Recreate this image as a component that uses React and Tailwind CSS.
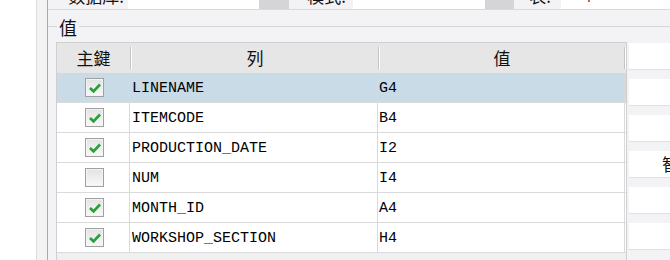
import React from 'react';

const rows = [
  { pk: true, col: 'LINENAME', val: 'G4', sel: true },
  { pk: true, col: 'ITEMCODE', val: 'B4' },
  { pk: true, col: 'PRODUCTION_DATE', val: 'I2' },
  { pk: false, col: 'NUM', val: 'I4' },
  { pk: true, col: 'MONTH_ID', val: 'A4' },
  { pk: true, col: 'WORKSHOP_SECTION', val: 'H4' },
];

function Check({ checked }) {
  return (
    <div className="w-[19px] h-[19px] border border-[#a0a0a0] flex">
      <div className="flex-1 border border-[#f4f4f4] bg-linear-to-b from-[#e4e4e4] to-[#f7f7f7]">
        {checked && (
          <svg width="15" height="15" viewBox="0 0 15 15" className="block">
            <path d="M3 8 L6.5 11.3 L13 4.5" stroke="#22a336" strokeWidth="2.6" fill="none" />
          </svg>
        )}
      </div>
    </div>
  );
}

function HeadSep() {
  return <div className="w-[2px] h-[22px] border-l border-[#c4c4c4] border-r border-r-white" />;
}

export default function App() {
  const cjk = "font-['Noto_Sans_CJK_SC','Microsoft_YaHei',sans-serif]";
  const mono = "font-['Liberation_Mono',monospace]";
  return (
    <div className={`w-[670px] h-[260px] overflow-hidden bg-white flex ${cjk}`}>
      <div className="w-[36px] bg-white shrink-0" />
      <div className="w-px bg-[#dedede] shrink-0" />
      <div className="w-[10px] bg-[#f3f3f4] shrink-0" />
      <div className="w-px bg-[#a9a9a9] shrink-0" />
      <div className="flex-1 bg-[#f3f3f5] flex flex-col min-w-0">
        {/* top inputs row, mostly cut off */}
        <div className="h-[10px] flex shrink-0 border-b border-[#dadadc] overflow-hidden text-[17px] text-[#111]">
          <div className="w-[80px] flex justify-end pr-[4px] leading-[18px] mt-[-13px]">数据库:</div>
          <div className="w-[131px] bg-white" />
          <div className="w-[30px] bg-[#d5d5d8]" />
          <div className="w-[64px] flex justify-end pr-[7px] leading-[18px] mt-[-13px]">模式:</div>
          <div className="w-[132px] bg-white pl-[12px] text-[13px] leading-[14px] mt-[-12px] text-[#333]">SCHEMA01</div>
          <div className="w-[29px] bg-[#d5d5d8]" />
          <div className="w-[47px] flex justify-end pr-[10px] leading-[18px] mt-[-13px]">表:</div>
          <div className="flex-1 bg-white pl-[24px] text-[13px] leading-[14px] mt-[-10px] text-[#333]">T</div>
        </div>
        {/* group box title */}
        <div className="h-[32px] shrink-0 flex items-center">
          <div className="w-[9px] h-px bg-[#d6d6d8] mt-[1px]" />
          <div className="text-[18px] leading-[20px] text-[#111] px-[2px] mt-[1px]">值</div>
          <div className="flex-1 h-px bg-[#d6d6d8] mt-[1px]" />
        </div>
        {/* content */}
        <div className="flex flex-1 min-h-0 pl-[8px]">
          <div className="w-[571px] shrink-0 border border-[#cfcfcf] bg-[#f0f0f0] flex flex-col h-[240px]">
            <div className="h-[30px] bg-[#e6e6e6] flex items-center text-[17px] text-[#111] shrink-0">
              <div className="w-[73px] flex justify-center">主鍵</div>
              <HeadSep />
              <div className="w-[246px] flex justify-center">列</div>
              <HeadSep />
              <div className="w-[244px] flex justify-center">值</div>
              <HeadSep />
            </div>
            {rows.map((r) => (
              <div
                key={r.col}
                className={`h-[30px] flex border-b border-[#dadada] shrink-0 ${r.sel ? 'bg-[#c9dbe7]' : 'bg-white'}`}
              >
                <div className="w-[73px] border-r border-[#d9d9d9] flex items-center justify-center pl-[2px]">
                  <Check checked={r.pk} />
                </div>
                <div className={`w-[248px] border-r border-[#d9d9d9] flex items-center pl-[2px] pt-[3px] text-[15px] text-black ${mono}`}>
                  {r.col}
                </div>
                <div className={`w-[247px] border-r border-[#d9d9d9] flex items-center pl-[1px] pt-[3px] text-[15px] text-black ${mono}`}>
                  {r.val}
                </div>
              </div>
            ))}
          </div>
          <div className="flex-1 ml-[2px] flex flex-col gap-[9px] pt-[1px] min-w-0">
            {[0, 1, 2, 3, 4, 5].map((i) => (
              <div key={i} className="h-[27px] bg-white border-b border-[#e0e0e2] flex items-center text-[17px] text-[#111] pl-[33px] whitespace-nowrap overflow-hidden">
                {i === 3 ? '智能匹配' : ''}
              </div>
            ))}
          </div>
        </div>
      </div>
    </div>
  );
}
